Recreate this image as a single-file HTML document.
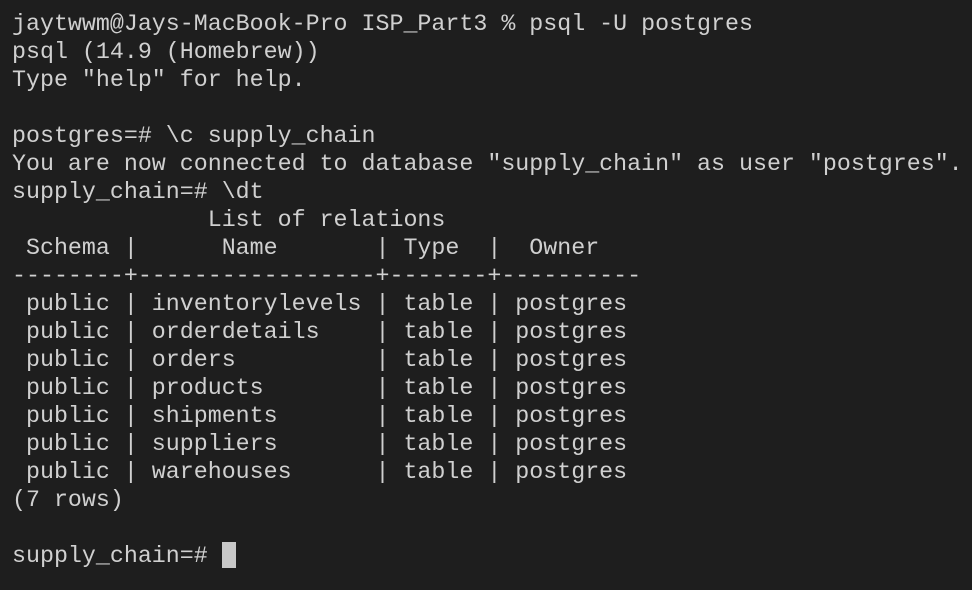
<!DOCTYPE html>
<html><head><meta charset="utf-8"><style>
html,body{margin:0;padding:0;background:#1e1e1e;width:972px;height:590px;overflow:hidden}
pre{margin:0;position:absolute;left:12px;top:10px;font-family:"Liberation Mono",monospace;font-size:23.3px;line-height:28px;color:#d0d0d0;white-space:pre}
.cur{display:inline-block;width:14px;height:26px;background:#c8c8c8;vertical-align:-6px}
</style></head><body><pre>jaytwwm@Jays-MacBook-Pro ISP_Part3 % psql -U postgres
psql (14.9 (Homebrew))
Type "help" for help.

postgres=# \c supply_chain
You are now connected to database "supply_chain" as user "postgres".
supply_chain=# \dt
              List of relations
 Schema |      Name       | Type  |  Owner
--------+-----------------+-------+----------
 public | inventorylevels | table | postgres
 public | orderdetails    | table | postgres
 public | orders          | table | postgres
 public | products        | table | postgres
 public | shipments       | table | postgres
 public | suppliers       | table | postgres
 public | warehouses      | table | postgres
(7 rows)

supply_chain=# <span class="cur"></span></pre></body></html>
